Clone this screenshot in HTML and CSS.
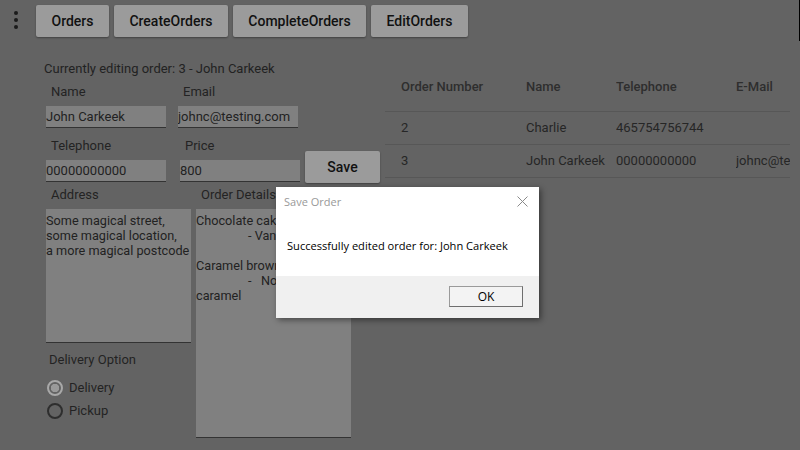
FILE: index.html
```html
<!DOCTYPE html>
<html>
<head>
<meta charset="utf-8">
<link rel="stylesheet" href="styles.css">
</head>
<body>
<div class="app">
  <div class="topbar">
    <div class="kebab"><span></span><span></span><span></span></div>
    <button class="nav-btn">Orders</button>
    <button class="nav-btn">CreateOrders</button>
    <button class="nav-btn">CompleteOrders</button>
    <button class="nav-btn">EditOrders</button>
  </div>
  <div class="main">
    <div class="form">
      <div class="caption">Currently editing order: 3 - John Carkeek</div>
      <div class="row row1">
        <div class="field w120"><div class="label">Name</div><div class="input">John Carkeek</div></div>
        <div class="field w120 gap12"><div class="label">Email</div><div class="input">johnc@testing.com</div></div>
      </div>
      <div class="row row2">
        <div class="field w120"><div class="label">Telephone</div><div class="input">00000000000</div></div>
        <div class="field w120 gap14"><div class="label">Price</div><div class="input">800</div></div>
        <button class="save-btn">Save</button>
      </div>
      <div class="row row3">
        <div class="left-col">
          <div class="field w145"><div class="label">Address</div>
            <div class="textarea addr">Some magical street,<br>some magical location,<br>a more magical postcode</div>
          </div>
          <div class="delivery">
            <div class="label dlabel">Delivery Option</div>
            <div class="radio"><span class="circle checked"></span>Delivery</div>
            <div class="radio"><span class="circle"></span>Pickup</div>
          </div>
        </div>
        <div class="field w155 gap5"><div class="label">Order Details</div>
          <div class="textarea details">
            <div>Chocolate cake</div>
            <div class="ind">- Vanilla icing</div>
            <div>&nbsp;</div>
            <div>Caramel brownie</div>
            <div class="ind">-&nbsp;&nbsp;&nbsp;No salted</div>
            <div>caramel</div>
          </div>
        </div>
      </div>
    </div>
    <div class="table-wrap">
      <div class="trow thead">
        <div class="c1">Order Number</div><div class="c2">Name</div><div class="c3">Telephone</div><div class="c4">E-Mail</div>
      </div>
      <div class="trow">
        <div class="c1">2</div><div class="c2">Charlie</div><div class="c3">465754756744</div><div class="c4"></div>
      </div>
      <div class="trow">
        <div class="c1">3</div><div class="c2">John Carkeek</div><div class="c3">00000000000</div><div class="c4">johnc@testing.com</div>
      </div>
    </div>
  </div>

  <div class="dialog">
    <div class="dlg-title">
      <span>Save Order</span>
      <svg class="close" width="11" height="11" viewBox="0 0 11 11"><path d="M0.5 0.5 L10.5 10.5 M10.5 0.5 L0.5 10.5" stroke="#8a8a8a" stroke-width="1" fill="none"/></svg>
    </div>
    <div class="dlg-body">Successfully edited order for: John Carkeek</div>
    <div class="dlg-foot"><button class="ok-btn">OK</button></div>
  </div>
</div>
</body>
</html>
```
FILE: styles.css
```css
html, body { margin: 0; padding: 0; }
body {
  background: #636363;
  font-family: Roboto, "Liberation Sans", sans-serif;
  color: #232323;
  width: 800px;
  height: 450px;
  overflow: hidden;
}
.app { position: relative; width: 800px; height: 450px; }

.topbar {
  display: flex;
  align-items: flex-start;
  gap: 5px;
  padding-top: 5px;
  height: 36px;
  border-right: 1px solid #000;
  box-sizing: content-box;
  width: 799px;
}
.kebab {
  width: 31px;
  display: flex;
  flex-direction: column;
  align-items: center;
  gap: 3px;
  padding-top: 6px;
}
.kebab span { width: 4px; height: 4px; border-radius: 50%; background: #1a1a1a; }
.nav-btn {
  height: 32px;
  background: #9b9b9b;
  border: none;
  border-radius: 2px;
  box-shadow: 0 1px 2px rgba(0,0,0,0.35);
  font-family: Roboto, sans-serif;
  font-weight: 500;
  font-size: 14px;
  color: #111;
  padding: 0;
  margin: 0;
}
.nav-btn:nth-of-type(1) { width: 73px; }
.nav-btn:nth-of-type(2) { width: 114px; }
.nav-btn:nth-of-type(3) { width: 133px; }
.nav-btn:nth-of-type(4) { width: 97px; }

.main { display: flex; }
.form { width: 339px; padding-left: 44px; padding-top: 20px; flex: none; }
.caption { font-size: 13px; line-height: 16px; color: #222; }
.row { display: flex; align-items: flex-start; }
.field { display: flex; flex-direction: column; }
.w120 { width: 120px; }
.w145 { width: 145px; }
.w155 { width: 155px; }
.gap12 { margin-left: 12px; }
.gap14 { margin-left: 14px; }
.gap5 { margin-left: 5px; }
.label { font-size: 13px; line-height: 16px; padding-left: 5px; color: #232323; }
.row > .field:first-child, .left-col { margin-left: 2px; }
.row1 { margin-top: 7px; }
.row1 .label { margin-bottom: 6px; }
.input {
  height: 21px;
  background: #808080;
  border-bottom: 1px solid #333;
  font-size: 13px;
  line-height: 22px;
  color: #222;
  white-space: nowrap;
  overflow: hidden;
}
.row2 { margin-top: 10px; }
.row2 .label { margin-bottom: 6px; }
.save-btn {
  margin-left: 5px;
  margin-top: 13px;
  width: 75px;
  height: 32px;
  background: #9b9b9b;
  border: none;
  border-radius: 2px;
  box-shadow: 0 1px 2px rgba(0,0,0,0.35);
  font-family: Roboto, sans-serif;
  font-weight: 500;
  font-size: 14px;
  color: #111;
}
.row3 { margin-top: 4px; }
.row3 .label { margin-bottom: 6px; }
.textarea {
  background: #808080;
  border-bottom: 1px solid #333;
  font-size: 12.7px;
  line-height: 15px;
  color: #222;
  padding-top: 4px;
  box-sizing: border-box;
  overflow: hidden;
  white-space: nowrap;
}
.addr { height: 134px; }
.details { height: 229px; }
.ind { padding-left: 52px; }
.delivery { margin-top: 9px; }
.row3 .dlabel { padding-left: 3px; margin-bottom: 8px; }
.radio {
  display: flex;
  align-items: center;
  font-size: 13px;
  line-height: 16px;
  height: 23px;
  gap: 6px;
  padding-left: 1px;
}
.circle {
  width: 12px; height: 12px;
  border: 2px solid #2e2e2e;
  border-radius: 50%;
  flex: none;
}
.circle.checked {
  border-color: #a8a8a8;
  background: radial-gradient(circle, #9a9a9a 0 4px, transparent 4.5px);
}

.table-wrap { margin-left: 2px; margin-top: 21px; width: 405px; overflow: hidden; }
.trow {
  display: grid;
  grid-template-columns: 141px 90px 120px 120px;
  height: 32px;
  align-items: center;
  border-bottom: 1px solid #575757;
  font-size: 13px;
  line-height: 14px;
  white-space: nowrap;
  color: #262626;
}
.trow > div { overflow: hidden; }
.trow > .c1 { padding-left: 16px; }
.thead { height: 49px; font-weight: 500; color: #2e2e2e; }

.dialog {
  position: absolute;
  left: 276px;
  top: 187px;
  width: 263px;
  height: 131px;
  background: #fff;
  box-shadow: 2px 2px 6px rgba(0,0,0,0.45);
  font-family: "Open Sans", "Noto Sans", sans-serif;
  display: flex;
  flex-direction: column;
}
.dlg-title {
  height: 28px;
  display: flex;
  align-items: center;
  justify-content: space-between;
  padding: 0 11px 0 8px;
  font-size: 11px;
  color: #999;
}
.close { margin-top: 1px; }
.dlg-body {
  height: 61px;
  padding-left: 11px;
  font-size: 11.1px;
  color: #000;
  display: flex;
  align-items: center;
}
.dlg-foot {
  flex: 1;
  background: #f0f0f0;
  display: flex;
  justify-content: flex-end;
  align-items: flex-start;
  padding: 10px 16px 0 0;
}
.ok-btn {
  width: 74px;
  height: 21px;
  background: #f3f3f3;
  border: 1px solid #9a9a9a;
  border-right-color: #6e6e6e;
  border-bottom-color: #6e6e6e;
  font-family: "Open Sans", sans-serif;
  font-size: 12px;
  color: #000;
  padding: 0;
}
```
